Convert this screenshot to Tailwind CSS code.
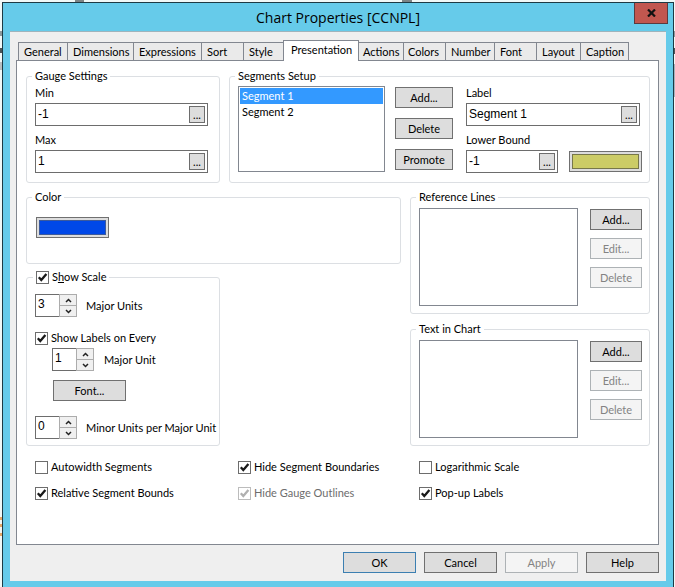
<!DOCTYPE html>
<html lang="en">
<head>
  <meta charset="UTF-8" />
  <meta name="viewport" content="width=device-width, initial-scale=1.0" />
  <title>Chart Properties [CCNPL]</title>
  <script src="https://cdn.jsdelivr.net/npm/@tailwindcss/browser@4"></script>
</head>
<body class="relative min-h-screen flex flex-col bg-[#f1f8f7] pt-[2px] pl-[2px] pr-px font-[Lato,'Liberation_Sans',sans-serif] text-[11px] leading-4 text-black">
  <!-- Bits of the window behind the dialog -->
  <div class="absolute top-0 left-[75px] w-[9px] h-[2px] bg-[#7d8486]"></div>
  <div class="absolute top-0 left-[402px] w-[10px] h-[2px] bg-[#7d8486]"></div>
  <div class="absolute top-[31px] left-0 w-[2px] h-[5px] bg-[#8d999c]"></div>
  <div class="absolute top-[48px] left-0 w-[2px] h-[5px] bg-[#4c5558]"></div>
  <div class="absolute top-[62px] left-0 w-[2px] h-[8px] bg-[#b9bfc1]"></div>
  <div class="absolute top-[517px] left-0 w-[2px] h-[3px] bg-[#e5a868]"></div>
  <div class="absolute top-[524px] left-0 w-[2px] h-[3px] bg-[#e5a868]"></div>
  <div class="absolute top-[533px] left-0 w-[2px] h-[3px] bg-[#e5a868]"></div>
  <div class="absolute top-[31px] right-0 w-px h-[6px] bg-[#8d999c]"></div>
  <div class="absolute top-[48px] right-0 w-px h-[6px] bg-[#4c5558]"></div>
  <div class="absolute top-[64px] right-0 w-px h-[33px] bg-[#a3b4bd]"></div>

  <!-- Dialog window -->
  <div class="relative flex-1 flex flex-col bg-[#66cbea] border border-b-0 border-[#1d3a44] px-[7px] pb-[6px]">
    <h1 class="h-[28px] pt-1 text-center font-['Open_Sans','Noto_Sans',sans-serif] text-[14px] leading-[22px]">Chart Properties [CCNPL]</h1>
    <button type="button" aria-label="Close" class="absolute top-0 right-[5px] w-[34px] h-[21px] flex items-center justify-center bg-[#c1574f] border border-t-0 border-[#5c3a3e]">
      <svg class="w-[9px] h-[8px]" viewBox="0 0 9 8"><path d="M1 0.5L8 7.5M8 0.5L1 7.5" stroke="#111" stroke-width="2.2" /></svg>
    </button>

    <main class="flex-1 flex flex-col bg-[#efefef] border-t border-[#9fb4bc] pt-[7px] pl-[6px] pr-[7px] pb-2">
      <!-- Tabs -->
      <nav class="flex items-end pl-[2px] h-[21px] relative z-10">
        <button type="button" class="h-[18px] w-[50px] pl-[5px] text-left bg-[#eaeaea] border border-b-0 border-[#828790]">General</button>
        <button type="button" class="h-[18px] w-[66px] pl-[5px] text-left bg-[#eaeaea] border border-l-0 border-b-0 border-[#828790]">Dimensions</button>
        <button type="button" class="h-[18px] w-[68px] pl-[5px] text-left bg-[#eaeaea] border border-l-0 border-b-0 border-[#828790]">Expressions</button>
        <button type="button" class="h-[18px] w-[42px] pl-[5px] text-left bg-[#eaeaea] border border-l-0 border-b-0 border-[#828790]">Sort</button>
        <button type="button" class="h-[18px] w-[39px] pl-[5px] text-left bg-[#eaeaea] border-t border-[#828790]">Style</button>
        <button type="button" class="h-[21px] w-[76px] -mb-px pl-[7px] pb-[2px] text-left bg-white border border-b-0 border-[#828790]">Presentation</button>
        <button type="button" class="h-[18px] w-[45px] pl-1 text-left bg-[#eaeaea] border border-l-0 border-b-0 border-[#828790]">Actions</button>
        <button type="button" class="h-[18px] w-[42px] pl-1 text-left bg-[#eaeaea] border border-l-0 border-b-0 border-[#828790]">Colors</button>
        <button type="button" class="h-[18px] w-[49px] pl-[5px] text-left bg-[#eaeaea] border border-l-0 border-b-0 border-[#828790]">Number</button>
        <button type="button" class="h-[18px] w-[42px] pl-[5px] text-left bg-[#eaeaea] border border-l-0 border-b-0 border-[#828790]">Font</button>
        <button type="button" class="h-[18px] w-[44px] pl-[5px] text-left bg-[#eaeaea] border border-l-0 border-b-0 border-[#828790]">Layout</button>
        <button type="button" class="h-[18px] w-[48px] pl-[5px] text-left bg-[#eaeaea] border border-l-0 border-b-0 border-[#828790]">Caption</button>
      </nav>

      <form class="flex-1 bg-white border border-[#828790] pt-2 pl-[9px] pr-2 pb-4">
        <div class="flex gap-[9px]">
          <fieldset class="w-[194px] min-w-0 shrink-0 h-[114px] border border-[#dcdfe3] rounded-[3px] pt-[2px] pl-2 pr-[11px]">
            <legend class="-ml-[3px] px-[3px] leading-[14px]">Gauge Settings</legend>
            <label for="min" class="block">Min</label>
            <div class="mt-[2px] h-[23px] flex border border-[#6d6d6d] p-[2px]">
              <input id="min" type="text" value="-1" class="flex-1 min-w-0 font-['Liberation_Sans',Arial,sans-serif] text-[12px] leading-4 pb-[2px] outline-none" />
              <button type="button" class="w-4 bg-[#dddddd] border border-[#6d6d6d] leading-[14px]">...</button>
            </div>
            <label for="max" class="block mt-[6px]">Max</label>
            <div class="mt-[2px] h-[23px] flex border border-[#6d6d6d] p-[2px]">
              <input id="max" type="text" value="1" class="flex-1 min-w-0 font-['Liberation_Sans',Arial,sans-serif] text-[12px] leading-4 pb-[2px] outline-none" />
              <button type="button" class="w-4 bg-[#dddddd] border border-[#6d6d6d] leading-[14px]">...</button>
            </div>
          </fieldset>

          <fieldset class="flex-1 min-w-0 h-[114px] border border-[#dcdfe3] rounded-[3px] pt-[2px] pl-2 pr-[7px]">
            <legend class="-ml-[3px] px-[3px] leading-[14px]">Segments Setup</legend>
            <div class="flex">
              <select size="5" aria-label="Segments" class="mt-px flex-1 min-w-0 h-[86px] p-px bg-white border border-[#828790] overflow-hidden outline-none">
                <option selected class="h-4 min-h-0 px-[2px] pt-px pb-0 leading-[15px] text-white bg-linear-to-r from-[#3399ff] to-[#3399ff]">Segment 1</option>
                <option class="h-4 min-h-0 px-[2px] pt-px pb-0 leading-[15px]">Segment 2</option>
              </select>
              <div class="ml-[10px] mt-[2px] flex flex-col gap-[10px]">
                <button type="button" class="w-[58px] h-[21px] bg-[#dddddd] border border-[#707070]">Add...</button>
                <button type="button" class="w-[58px] h-[21px] bg-[#dddddd] border border-[#707070]">Delete</button>
                <button type="button" class="w-[58px] h-[21px] bg-[#dddddd] border border-[#707070]">Promote</button>
              </div>
              <div class="ml-[13px] w-[176px]">
                <label for="label" class="block">Label</label>
                <div class="mt-[2px] w-[174px] h-[23px] flex border border-[#6d6d6d] p-[2px]">
                  <input id="label" type="text" value="Segment 1" class="flex-1 min-w-0 font-['Liberation_Sans',Arial,sans-serif] text-[12px] leading-4 pb-[2px] outline-none" />
                  <button type="button" class="w-4 bg-[#dddddd] border border-[#6d6d6d] leading-[14px]">...</button>
                </div>
                <label for="bound" class="block mt-[6px]">Lower Bound</label>
                <div class="mt-[2px] flex justify-between items-center">
                  <div class="w-[92px] h-[23px] flex border border-[#6d6d6d] p-[2px]">
                    <input id="bound" type="text" value="-1" class="flex-1 min-w-0 font-['Liberation_Sans',Arial,sans-serif] text-[12px] leading-4 pb-[2px] outline-none" />
                    <button type="button" class="w-4 bg-[#dddddd] border border-[#6d6d6d] leading-[14px]">...</button>
                  </div>
                  <button type="button" aria-label="Segment color" class="w-[73px] h-[21px] p-[2px] bg-[#dddddd] border border-[#707070]">
                    <span class="block h-full bg-[#cccc66] border border-[#77774a]"></span>
                  </button>
                </div>
              </div>
            </div>
          </fieldset>
        </div>

        <div class="mt-[7px] flex gap-[9px]">
          <div class="flex-1">
            <fieldset class="h-[74px] border border-[#dcdfe3] rounded-[3px] pt-[13px] pl-[9px]">
              <legend class="-ml-1 px-[3px] leading-[14px]">Color</legend>
              <button type="button" aria-label="Gauge color" class="block w-[73px] h-[21px] p-[2px] bg-[#dddddd] border border-[#707070]">
                <span class="block h-full bg-[#0048e8] border border-[#3c5a9c]"></span>
              </button>
            </fieldset>

            <fieldset class="mt-[6px] w-[194px] border border-[#dcdfe3] rounded-[3px] pt-[10px] pl-2 pb-[6px]">
              <legend class="-ml-[2px] px-[3px] leading-[14px]">
                <label class="flex items-center gap-[3px]">
                  <span class="relative flex">
                    <input type="checkbox" checked class="peer appearance-none w-[13px] h-[13px] bg-white border border-[#6d6d6d]" />
                    <svg class="absolute inset-0 hidden peer-checked:block pointer-events-none" viewBox="0 0 13 13"><path d="M2.8 6.2L5.3 9L10.4 3" fill="none" stroke="#1a1a1a" stroke-width="2.3" /></svg>
                  </span>
                  <span>S<u>h</u>ow Scale</span>
                </label>
              </legend>
              <div class="flex items-center gap-[9px]">
                <div class="w-[42px] h-[23px] flex border border-[#6d6d6d]">
                  <input id="major" type="text" value="3" class="flex-1 min-w-0 pl-[2px] pb-[3px] font-['Liberation_Sans',Arial,sans-serif] text-[12px] leading-4 outline-none" />
                  <div class="w-4 flex flex-col -my-px -mr-px bg-[#acacac] p-px gap-px box-content">
                    <button type="button" aria-label="More" class="flex-1 flex items-center justify-center bg-[#f0f0f0]"><svg class="w-[7px] h-[5px]" viewBox="0 0 7 5"><path d="M1 4L3.5 1.5L6 4" fill="none" stroke="#222" stroke-width="1.5" /></svg></button>
                    <button type="button" aria-label="Less" class="flex-1 flex items-center justify-center bg-[#f0f0f0]"><svg class="w-[7px] h-[5px]" viewBox="0 0 7 5"><path d="M1 1L3.5 3.5L6 1" fill="none" stroke="#222" stroke-width="1.5" /></svg></button>
                  </div>
                </div>
                <label for="major">Major Units</label>
              </div>
              <label class="mt-[13px] flex items-center gap-[3px]">
                <span class="relative flex">
                  <input type="checkbox" checked class="peer appearance-none w-[13px] h-[13px] bg-white border border-[#6d6d6d]" />
                  <svg class="absolute inset-0 hidden peer-checked:block pointer-events-none" viewBox="0 0 13 13"><path d="M2.8 6.2L5.3 9L10.4 3" fill="none" stroke="#1a1a1a" stroke-width="2.3" /></svg>
                </span>
                Show Labels on Every
              </label>
              <div class="mt-[2px] ml-[17px] flex items-center gap-[10px]">
                <div class="w-[42px] h-[23px] flex border border-[#6d6d6d]">
                  <input id="every" type="text" value="1" class="flex-1 min-w-0 pl-[2px] pb-[3px] font-['Liberation_Sans',Arial,sans-serif] text-[12px] leading-4 outline-none" />
                  <div class="w-4 flex flex-col -my-px -mr-px bg-[#acacac] p-px gap-px box-content">
                    <button type="button" aria-label="More" class="flex-1 flex items-center justify-center bg-[#f0f0f0]"><svg class="w-[7px] h-[5px]" viewBox="0 0 7 5"><path d="M1 4L3.5 1.5L6 4" fill="none" stroke="#222" stroke-width="1.5" /></svg></button>
                    <button type="button" aria-label="Less" class="flex-1 flex items-center justify-center bg-[#f0f0f0]"><svg class="w-[7px] h-[5px]" viewBox="0 0 7 5"><path d="M1 1L3.5 3.5L6 1" fill="none" stroke="#222" stroke-width="1.5" /></svg></button>
                  </div>
                </div>
                <label for="every">Major Unit</label>
              </div>
              <button type="button" class="block mt-[9px] ml-[18px] w-[73px] h-[21px] bg-[#dddddd] border border-[#707070]">Font...</button>
              <div class="mt-[15px] flex items-center gap-[9px]">
                <div class="w-[42px] h-[23px] flex border border-[#6d6d6d]">
                  <input id="minor" type="text" value="0" class="flex-1 min-w-0 pl-[2px] pb-[3px] font-['Liberation_Sans',Arial,sans-serif] text-[12px] leading-4 outline-none" />
                  <div class="w-4 flex flex-col -my-px -mr-px bg-[#acacac] p-px gap-px box-content">
                    <button type="button" aria-label="More" class="flex-1 flex items-center justify-center bg-[#f0f0f0]"><svg class="w-[7px] h-[5px]" viewBox="0 0 7 5"><path d="M1 4L3.5 1.5L6 4" fill="none" stroke="#222" stroke-width="1.5" /></svg></button>
                    <button type="button" aria-label="Less" class="flex-1 flex items-center justify-center bg-[#f0f0f0]"><svg class="w-[7px] h-[5px]" viewBox="0 0 7 5"><path d="M1 1L3.5 3.5L6 1" fill="none" stroke="#222" stroke-width="1.5" /></svg></button>
                  </div>
                </div>
                <label for="minor">Minor Units per Major Unit</label>
              </div>
            </fieldset>
          </div>

          <div class="w-[240px] flex flex-col gap-2">
            <fieldset class="h-[124px] border border-[#dcdfe3] rounded-[3px] pt-1 pl-2 pr-[7px]">
              <legend class="-ml-[3px] px-[3px] leading-[14px]">Reference Lines</legend>
              <div class="flex justify-between">
                <select size="5" aria-label="Reference Lines" class="w-[159px] h-[98px] bg-white border border-[#828790] outline-none"></select>
                <div class="mt-px flex flex-col gap-2">
                  <button type="button" class="w-[52px] h-[21px] bg-[#dddddd] border border-[#707070]">Add...</button>
                  <button type="button" disabled class="w-[52px] h-[21px] bg-[#f4f4f4] border border-[#adb2b5] text-[#838383]">Edit...</button>
                  <button type="button" disabled class="w-[52px] h-[21px] bg-[#f4f4f4] border border-[#adb2b5] text-[#838383]">Delete</button>
                </div>
              </div>
            </fieldset>
            <fieldset class="h-[124px] border border-[#dcdfe3] rounded-[3px] pt-1 pl-2 pr-[7px]">
              <legend class="-ml-[3px] px-[3px] leading-[14px]">Text in Chart</legend>
              <div class="flex justify-between">
                <select size="5" aria-label="Text in Chart" class="w-[159px] h-[98px] bg-white border border-[#828790] outline-none"></select>
                <div class="mt-px flex flex-col gap-2">
                  <button type="button" class="w-[52px] h-[21px] bg-[#dddddd] border border-[#707070]">Add...</button>
                  <button type="button" disabled class="w-[52px] h-[21px] bg-[#f4f4f4] border border-[#adb2b5] text-[#838383]">Edit...</button>
                  <button type="button" disabled class="w-[52px] h-[21px] bg-[#f4f4f4] border border-[#adb2b5] text-[#838383]">Delete</button>
                </div>
              </div>
            </fieldset>
          </div>
        </div>

        <!-- Options -->
        <div class="mt-[13px] pl-[9px] grid grid-cols-[203px_181px_1fr] gap-y-[10px]">
          <label class="flex items-center gap-[3px]">
            <input type="checkbox" class="appearance-none w-[13px] h-[13px] bg-white border border-[#6d6d6d]" />
            Autowidth Segments
          </label>
          <label class="flex items-center gap-[3px]">
            <span class="relative flex">
              <input type="checkbox" checked class="peer appearance-none w-[13px] h-[13px] bg-white border border-[#6d6d6d]" />
              <svg class="absolute inset-0 hidden peer-checked:block pointer-events-none" viewBox="0 0 13 13"><path d="M2.8 6.2L5.3 9L10.4 3" fill="none" stroke="#1a1a1a" stroke-width="2.3" /></svg>
            </span>
            Hide Segment Boundaries
          </label>
          <label class="flex items-center gap-[3px]">
            <input type="checkbox" class="appearance-none w-[13px] h-[13px] bg-white border border-[#6d6d6d]" />
            Logarithmic Scale
          </label>
          <label class="flex items-center gap-[3px]">
            <span class="relative flex">
              <input type="checkbox" checked class="peer appearance-none w-[13px] h-[13px] bg-white border border-[#6d6d6d]" />
              <svg class="absolute inset-0 hidden peer-checked:block pointer-events-none" viewBox="0 0 13 13"><path d="M2.8 6.2L5.3 9L10.4 3" fill="none" stroke="#1a1a1a" stroke-width="2.3" /></svg>
            </span>
            Relative Segment Bounds
          </label>
          <label class="flex items-center gap-[3px] text-[#6d6d6d]">
            <span class="relative flex">
              <input type="checkbox" checked disabled class="peer appearance-none w-[13px] h-[13px] bg-white border border-[#bcbcbc]" />
              <svg class="absolute inset-0 hidden peer-checked:block pointer-events-none" viewBox="0 0 13 13"><path d="M2.8 6.2L5.3 9L10.4 3" fill="none" stroke="#b0b0b0" stroke-width="2.3" /></svg>
            </span>
            Hide Gauge Outlines
          </label>
          <label class="flex items-center gap-[3px]">
            <span class="relative flex">
              <input type="checkbox" checked class="peer appearance-none w-[13px] h-[13px] bg-white border border-[#6d6d6d]" />
              <svg class="absolute inset-0 hidden peer-checked:block pointer-events-none" viewBox="0 0 13 13"><path d="M2.8 6.2L5.3 9L10.4 3" fill="none" stroke="#1a1a1a" stroke-width="2.3" /></svg>
            </span>
            Pop-up Labels
          </label>
        </div>
      </form>

      <footer class="mt-[7px] flex justify-end gap-2">
        <button type="button" class="w-[73px] h-[21px] bg-[#dddddd] border border-[#3c7fb1]">OK</button>
        <button type="button" class="w-[73px] h-[21px] bg-[#dddddd] border border-[#707070]">Cancel</button>
        <button type="button" disabled class="w-[73px] h-[21px] bg-[#f4f4f4] border border-[#adb2b5] text-[#838383]">Apply</button>
        <button type="button" class="w-[73px] h-[21px] bg-[#dddddd] border border-[#707070]">Help</button>
      </footer>
    </main>
  </div>
</body>
</html>
